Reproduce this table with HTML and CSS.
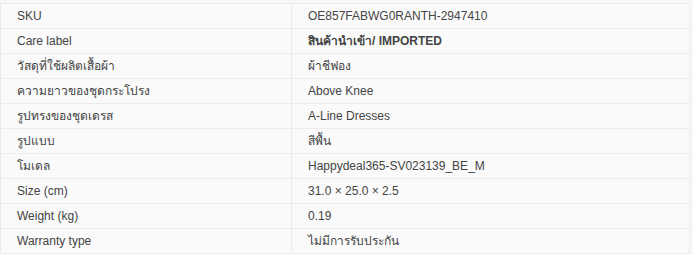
FILE: index.html
```html
<!DOCTYPE html>
<html lang="th">
<head>
<meta charset="utf-8">
<title>Specifications</title>
<link rel="stylesheet" href="styles.css">
</head>
<body>
<table class="specs">
  <tbody>
    <tr><td class="label">SKU</td><td class="value">OE857FABWG0RANTH-2947410</td></tr>
    <tr><td class="label">Care label</td><td class="value strong">สินค้านำเข้า/ IMPORTED</td></tr>
    <tr><td class="label">วัสดุที่ใช้ผลิตเสื้อผ้า</td><td class="value">ผ้าชีฟอง</td></tr>
    <tr><td class="label">ความยาวของชุดกระโปรง</td><td class="value">Above Knee</td></tr>
    <tr><td class="label">รูปทรงของชุดเดรส</td><td class="value">A-Line Dresses</td></tr>
    <tr><td class="label">รูปแบบ</td><td class="value">สีพื้น</td></tr>
    <tr><td class="label">โมเดล</td><td class="value">Happydeal365-SV023139_BE_M</td></tr>
    <tr><td class="label">Size (cm)</td><td class="value">31.0 × 25.0 × 2.5</td></tr>
    <tr><td class="label">Weight (kg)</td><td class="value">0.19</td></tr>
    <tr><td class="label">Warranty type</td><td class="value">ไม่มีการรับประกัน</td></tr>
  </tbody>
</table>
</body>
</html>
```
FILE: styles.css
```css
html, body {
  margin: 0;
  padding: 0;
  background: #f7f7f7;
}
body {
  padding-top: 3px;
  font-family: "Liberation Sans", Arial, "Noto Sans", sans-serif;
  font-size: 12px;
  color: #444;
}
.specs {
  width: 690px;
  border-collapse: collapse;
  background: #fafafa;
}
.specs td {
  height: 24px;
  padding: 0 16px;
  border: 1px solid #ececec;
  line-height: 14px;
  vertical-align: middle;
}
.specs .label {
  width: 258px;
}
.specs .strong {
  font-weight: bold;
}
```
